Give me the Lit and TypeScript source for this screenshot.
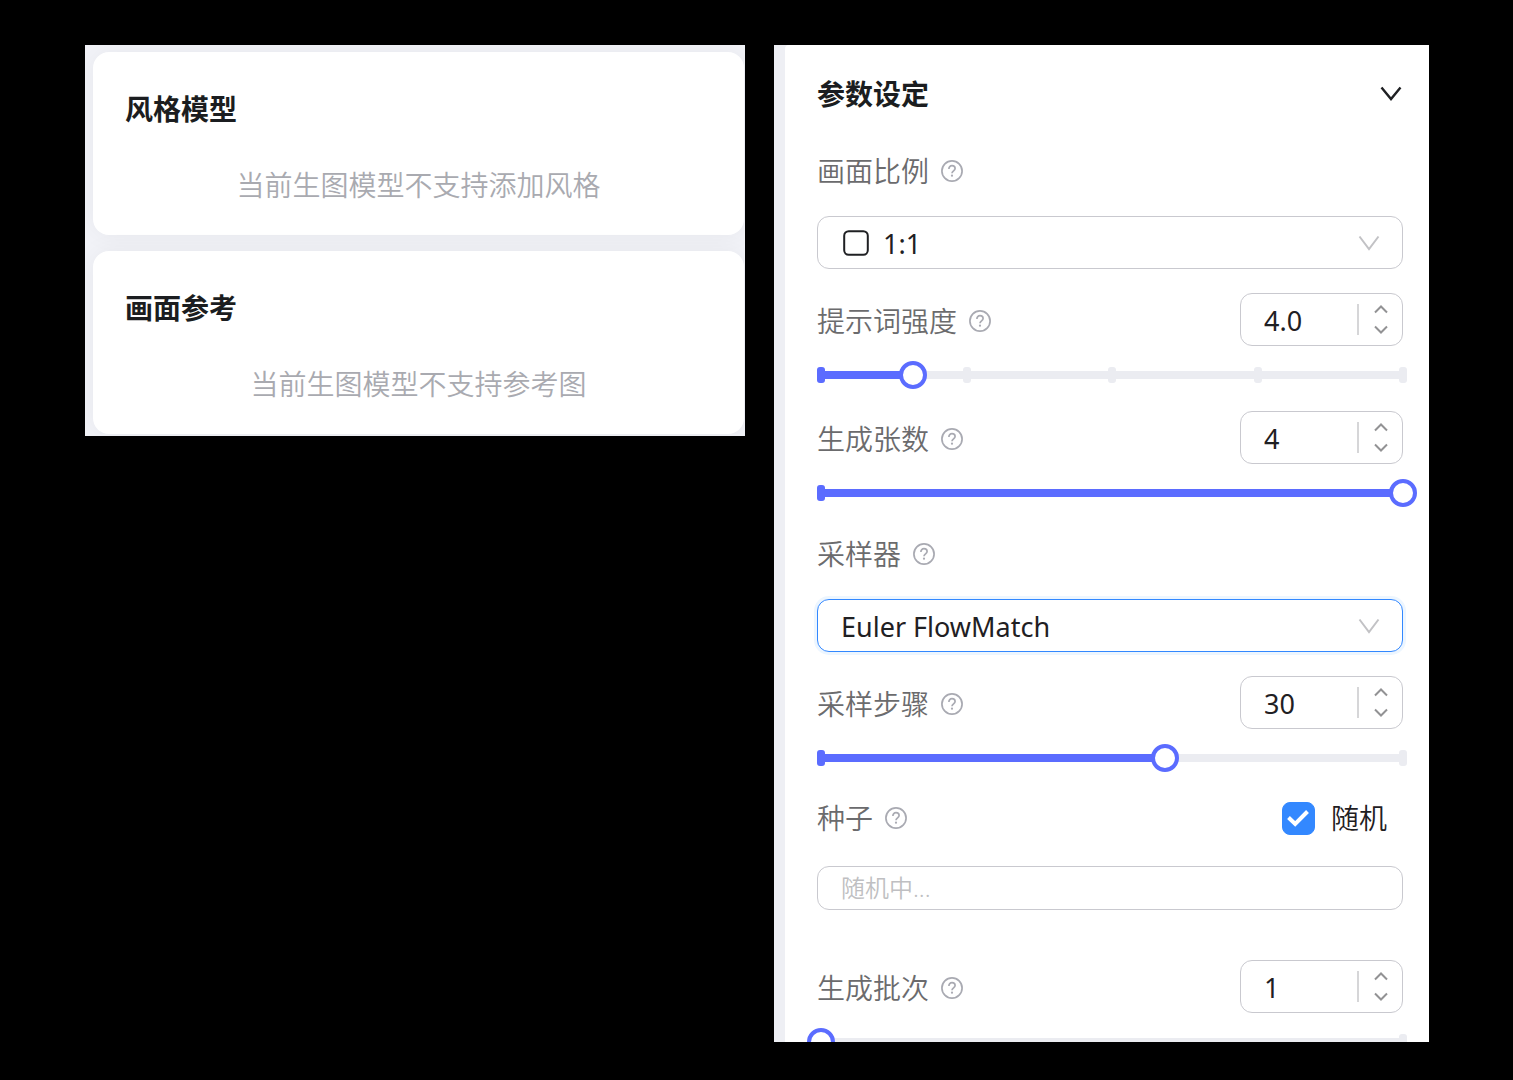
import { LitElement, html, css, svg, nothing } from "lit";
import { customElement, property, state } from "lit/decorators.js";

const base = css`
  * {
    box-sizing: border-box;
    margin: 0;
  }
  button,
  input,
  select {
    font: inherit;
    color: inherit;
    outline: none;
  }
  button {
    padding: 0;
    border: 0;
    background: none;
    cursor: pointer;
  }
  svg {
    display: block;
    fill: none;
    stroke: currentColor;
  }
`;

/** A field caption followed by its round help button. */
@customElement("field-caption")
export class FieldCaption extends LitElement {
  static styles = [
    base,
    css`
      :host {
        display: inline-flex;
        align-items: center;
        gap: 12px;
        color: #6b6b6d;
        font-weight: 350;
      }
      .help {
        color: #a9aab2;
      }
    `,
  ];

  render() {
    return html`<slot></slot>
      <button class="help" type="button" aria-label="说明">
        <svg width="22" height="22" viewBox="0 0 22 22" stroke-width="1.7">
          <circle cx="11" cy="11" r="10.1" />
          <path d="M7.9 8.9C7.9 6.9 9.2 5.7 11 5.7s3.1 1.2 3.1 2.8c0 2.3-3.1 2.4-3.1 4.8" />
          <circle cx="11" cy="15.7" r="1.1" fill="currentColor" stroke="none" />
        </svg>
      </button>`;
  }
}

/** Caption, number box and slider that share one value. */
@customElement("number-field")
export class NumberField extends LitElement {
  @property() label = "";
  @property({ type: Number }) value = 1;
  @property({ type: Number }) min = 1;
  @property({ type: Number }) max = 10;
  @property({ type: Number }) step = 1;
  @property({ type: Number }) digits = 0;
  @property({ type: Number }) ticks = 2;

  static styles = [
    base,
    css`
      :host {
        display: flex;
        flex-direction: column;
        gap: 15px;
      }
      .row {
        display: flex;
        align-items: center;
        justify-content: space-between;
      }
      .caption {
        padding-top: 3px;
      }
      .box {
        display: flex;
        align-items: center;
        width: 163px;
        height: 53px;
        border: 1px solid #c9c9cf;
        border-radius: 12px;
      }
      .number {
        flex: 1;
        min-width: 0;
        padding: 2px 0 0 23px;
        border: 0;
        background: none;
        font-size: 27px;
        appearance: textfield;
      }
      .number::-webkit-inner-spin-button {
        appearance: none;
        margin: 0;
      }
      .steps {
        display: flex;
        flex-direction: column;
        justify-content: space-between;
        align-items: center;
        width: 45px;
        height: 31px;
        border-left: 2px solid #d6d6d8;
        color: #929294;
      }
      .slider {
        display: grid;
        align-items: center;
        height: 28px;
        margin-right: -4px;
      }
      .slider > * {
        grid-area: 1 / 1;
      }
      .track,
      .fill {
        height: 8px;
        background: #ebecf1;
      }
      .fill,
      .tick.on {
        background: #5b6cff;
      }
      .ticks {
        display: flex;
        justify-content: space-between;
      }
      .tick {
        width: 8px;
        height: 16px;
        border-radius: 3px;
        background: #ebecf1;
      }
      .range {
        appearance: none;
        width: auto;
        height: 28px;
        margin: 0 -10px;
        background: none;
        cursor: pointer;
      }
      .range::-webkit-slider-thumb {
        appearance: none;
        width: 28px;
        height: 28px;
        border: 4px solid #5b6cff;
        border-radius: 50%;
        background: #fff;
      }
    `,
  ];

  private set(v: number) {
    this.value = Math.min(this.max, Math.max(this.min, v));
  }

  render() {
    const part = (this.value - this.min) / (this.max - this.min);
    const onInput = (e: Event) => this.set(Number((e.target as HTMLInputElement).value));
    return html`
      <div class="row">
        <field-caption class="caption"><label for="number">${this.label}</label></field-caption>
        <div class="box">
          <input
            class="number"
            id="number"
            type="number"
            min=${this.min}
            max=${this.max}
            step=${this.step}
            .value=${this.value.toFixed(this.digits)}
            @change=${onInput}
          />
          <div class="steps">
            <button type="button" aria-label="增加" @click=${() => this.set(this.value + this.step)}>
              <svg width="14" height="10" viewBox="0 0 14 10" stroke-width="2">
                <path d="M1 8.5 7 2.5l6 6" />
              </svg>
            </button>
            <button type="button" aria-label="减少" @click=${() => this.set(this.value - this.step)}>
              <svg width="14" height="10" viewBox="0 0 14 10" stroke-width="2">
                <path d="M1 1.5 7 7.5l6-6" />
              </svg>
            </button>
          </div>
        </div>
      </div>
      <div class="slider">
        <div class="track">
          <div class="fill" style="width: calc(4px + (100% - 8px) * ${part})"></div>
        </div>
        <div class="ticks">
          ${Array.from(
            { length: this.ticks },
            (_, i) => html`<span class="tick ${i / (this.ticks - 1) <= part ? "on" : ""}"></span>`,
          )}
        </div>
        <input
          class="range"
          type="range"
          aria-label=${this.label}
          min=${this.min}
          max=${this.max}
          step=${this.step}
          .value=${String(this.value)}
          @input=${onInput}
        />
      </div>
    `;
  }
}

/** Caption above a drop-down, with an optional ratio icon. */
@customElement("select-field")
export class SelectField extends LitElement {
  @property() label = "";
  @property({ type: Array }) options: string[] = [];
  @property({ type: Boolean }) ratio = false;
  @property({ type: Boolean }) active = false;

  static styles = [
    base,
    css`
      :host {
        display: flex;
        flex-direction: column;
        gap: 20px;
        padding-bottom: 2px;
      }
      .caption {
        display: flex;
        height: 50px;
      }
      .box {
        display: grid;
        align-items: center;
        color: #1f2023;
      }
      .box > * {
        grid-area: 1 / 1;
      }
      .select {
        appearance: none;
        width: 100%;
        height: 53px;
        padding: 2px 60px 0 23px;
        border: 1px solid #c9c9cf;
        border-radius: 12px;
        background: #fff;
        font-size: 27px;
      }
      .with-icon {
        padding-left: 65px;
      }
      .active {
        border-color: #3388ff;
        box-shadow: 0 0 0 3px #edf6ff;
      }
      .shape {
        margin-left: 26px;
        pointer-events: none;
      }
      .arrow {
        justify-self: end;
        margin-right: 23px;
        color: #c2c2c5;
        pointer-events: none;
      }
    `,
  ];

  render() {
    return html`
      <div class="caption">
        <field-caption><label for="select">${this.label}</label></field-caption>
      </div>
      <div class="box">
        <select
          id="select"
          class="select ${this.ratio ? "with-icon" : ""} ${this.active ? "active" : ""}"
        >
          ${this.options.map((o) => html`<option>${o}</option>`)}
        </select>
        ${this.ratio
          ? html`<svg class="shape" width="26" height="26" viewBox="0 0 26 26" stroke-width="2">
              <rect x="1.2" y="1.2" width="23.6" height="23.6" rx="4.5" />
            </svg>`
          : nothing}
        <svg class="arrow" width="22" height="16" viewBox="0 0 22 16" stroke-width="2">
          <path d="M1.5 1.5 11 14l9.5-12.5" />
        </svg>
      </div>
    `;
  }
}

@customElement("app-root")
export class AppRoot extends LitElement {
  @state() private open = true;
  @state() private random = true;

  static styles = [
    base,
    css`
      :host {
        display: grid;
        grid-template-columns: minmax(0, 660fr) minmax(0, 655fr);
        align-items: start;
        gap: 29px;
        height: 100vh;
        box-sizing: border-box;
        padding: 45px 84px 38px 85px;
        overflow: hidden;
        background: #000;
        color: #1f2023;
        font-family: "Noto Sans", "Noto Sans CJK SC", sans-serif;
        font-size: 28px;
        line-height: 48px;
      }
      .title {
        font-size: 28px;
        font-weight: 700;
        color: #1b1d20;
      }
      .side {
        display: flex;
        flex-direction: column;
        gap: 16px;
        padding: 7px 1px 2px 8px;
        overflow: hidden;
        background: #f2f3f8;
      }
      .card {
        display: flex;
        flex-direction: column;
        gap: 28px;
        padding: 33px 32px 26px;
        border-radius: 16px;
        background: #fff;
        box-shadow: 0 0 24px rgba(20, 20, 40, 0.05);
      }
      .empty {
        text-align: center;
        font-weight: 350;
        color: #a9aab0;
      }
      .settings {
        height: 100%;
        min-height: 0;
        padding-left: 11px;
        overflow: hidden;
        background: #eeeff4;
      }
      .form {
        display: flex;
        flex-direction: column;
        gap: 22px;
        padding: 25px 26px 24px 32px;
        border-top-left-radius: 4px;
        background: #fff;
      }
      .head {
        display: flex;
        align-items: center;
        justify-content: space-between;
        padding: 0 1px 6px 0;
      }
      .seed {
        display: flex;
        flex-direction: column;
        gap: 24px;
        padding-bottom: 28px;
      }
      .seed-row {
        display: flex;
        align-items: center;
        justify-content: space-between;
        height: 48px;
        padding-right: 16px;
      }
      .check {
        display: flex;
        align-items: center;
        gap: 16px;
        font-weight: 350;
      }
      .mark {
        display: grid;
        place-items: center;
        color: #fff;
      }
      .mark > * {
        grid-area: 1 / 1;
      }
      .tickbox {
        appearance: none;
        width: 33px;
        height: 33px;
        border: 1px solid #3388ff;
        border-radius: 8px;
        background: #fff;
      }
      .tickbox:checked {
        background: #3388ff;
      }
      .tickmark {
        pointer-events: none;
      }
      .text {
        width: 100%;
        height: 44px;
        padding: 0 23px;
        border: 1px solid #c9c9cf;
        border-radius: 12px;
        font-size: 24px;
        font-weight: 350;
      }
      .text::placeholder {
        color: #bfbfc2;
      }
    `,
  ];

  private card(title: string, text: string) {
    return html`<section class="card">
      <h2 class="title">${title}</h2>
      <p class="empty">${text}</p>
    </section>`;
  }

  private fields() {
    return html`
      <select-field label="画面比例" .options=${["1:1"]} ratio></select-field>
      <number-field label="提示词强度" value="4" max="20" step="0.5" digits="1" ticks="5"></number-field>
      <number-field label="生成张数" value="4" max="4"></number-field>
      <select-field label="采样器" .options=${["Euler FlowMatch"]} active></select-field>
      <number-field label="采样步骤" value="30" max="50"></number-field>
      <div class="seed">
        <div class="seed-row">
          <field-caption><label for="seed">种子</label></field-caption>
          <label class="check">
            <span class="mark">
              <input
                class="tickbox"
                type="checkbox"
                .checked=${this.random}
                @change=${() => (this.random = !this.random)}
              />
              <svg class="tickmark" width="22" height="18" viewBox="0 0 22 18" stroke-width="4">
                ${svg`<path d="M1.5 8.5 8.2 15 20.5 2.5" />`}
              </svg>
            </span>
            随机
          </label>
        </div>
        <input class="text" id="seed" type="text" placeholder="随机中..." />
      </div>
      <number-field label="生成批次" value="1" max="100"></number-field>
    `;
  }

  render() {
    return html`
      <aside class="side">
        ${this.card("风格模型", "当前生图模型不支持添加风格")}
        ${this.card("画面参考", "当前生图模型不支持参考图")}
      </aside>
      <main class="settings">
        <form class="form">
          <div class="head">
            <h2 class="title">参数设定</h2>
            <button
              type="button"
              aria-label="展开或收起"
              aria-expanded=${this.open}
              @click=${() => (this.open = !this.open)}
            >
              <svg width="22" height="16" viewBox="0 0 22 16" stroke-width="2.4">
                <path d="M1.5 1.5 11 13l9.5-11.5" />
              </svg>
            </button>
          </div>
          ${this.open ? this.fields() : nothing}
        </form>
      </main>
    `;
  }
}
